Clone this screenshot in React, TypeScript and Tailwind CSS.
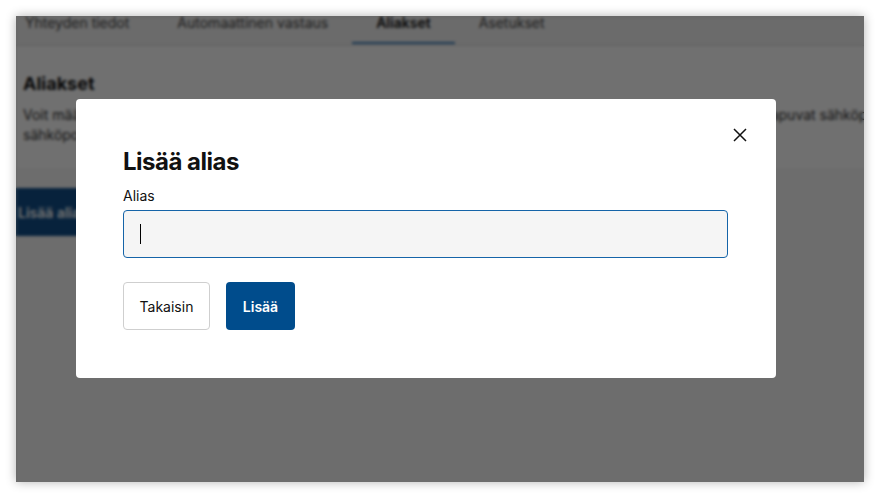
import React from 'react';

const tabs = [
  { label: 'Yhteyden tiedot', active: false },
  { label: 'Automaattinen vastaus', active: false },
  { label: 'Aliakset', active: true },
  { label: 'Asetukset', active: false },
];

function BackgroundPage() {
  return (
    <div className="flex h-full flex-col bg-white text-[#222]">
      <div className="flex h-[30px] shrink-0 border-b border-[#dcdcdc] bg-[#f3f3f3] px-[9px] text-[14px]">
        {tabs.map((tab) => (
          <div
            key={tab.label}
            className={`relative flex h-full items-start px-[24px] first:pl-0 ${tab.active ? 'font-semibold text-[#111]' : 'text-[#444]'}`}
          >
            <span className="-mt-[4px]">{tab.label}</span>
            {tab.active && <div className="absolute bottom-[1px] left-0 right-0 h-[2px] bg-[#3a7cb8]" />}
          </div>
        ))}
      </div>
      <div className="h-[122px] shrink-0 px-[7px] pt-[24px]">
        <h2 className="text-[18px] font-bold text-[#111]">Aliakset</h2>
        <p className="mt-[8px] whitespace-nowrap text-[14px] leading-[20px] text-[#333]">
          Voit määrittää sähköpostiosoitteellesi aliaksia. Aliaksiin lähetetyt viestit ohjautuvat samaan postilaatikkoon kuin saapuvat sähköpostit,
        </p>
        <p className="whitespace-nowrap text-[14px] leading-[20px] text-[#333]">sähköpostiosoitteeseesi.</p>
      </div>
      <div className="flex-1 bg-[#f8f8f8] pt-[20px]">
        <div className="flex h-[48px] w-[120px] items-center bg-[#124f8a] pl-[2px] text-[14px] font-semibold text-white">
          Lisää alias
        </div>
      </div>
    </div>
  );
}

export default function App() {
  return (
    <div className="h-[498px] w-[880px] bg-white p-4 font-['Inter',sans-serif]">
      <div className="relative h-[466px] w-[848px] overflow-hidden shadow-[0_0_10px_rgba(0,0,0,0.3)]">
        <BackgroundPage />
        <div className="absolute inset-0 bg-black/[0.56] pl-[60px] pt-[83px] backdrop-blur-[1.5px]">
          <div className="relative w-[700px] rounded-[4px] bg-white pb-12 pl-[47px] pr-12 pt-[47px] text-[#111]">
            <button className="absolute right-[29px] top-[29px] flex h-[14px] w-[14px] items-center justify-center">
              <svg width="14" height="14" viewBox="0 0 14 14" fill="none" stroke="#111" strokeWidth="1.5">
                <path d="M1 1L13 13M13 1L1 13" />
              </svg>
            </button>
            <h1 className="text-[24px] font-bold leading-[32px] tracking-[-0.5px]">Lisää alias</h1>
            <label className="mt-2 block text-[14px] leading-[20px] font-normal">Alias</label>
            <div className="mt-1 flex h-[48px] items-center rounded-[4px] border border-[#1564a8] bg-[#f5f5f5] pl-4">
              <span className="h-[20px] w-px bg-black" />
            </div>
            <div className="mt-6 flex gap-4">
              <button className="h-[48px] w-[87px] rounded-[4px] border border-[#cfcfcf] bg-white text-[14px] font-normal text-[#111]">
                Takaisin
              </button>
              <button className="h-[48px] w-[69px] rounded-[4px] bg-[#004c8c] text-[14px] font-semibold text-white">
                Lisää
              </button>
            </div>
          </div>
        </div>
      </div>
    </div>
  );
}
